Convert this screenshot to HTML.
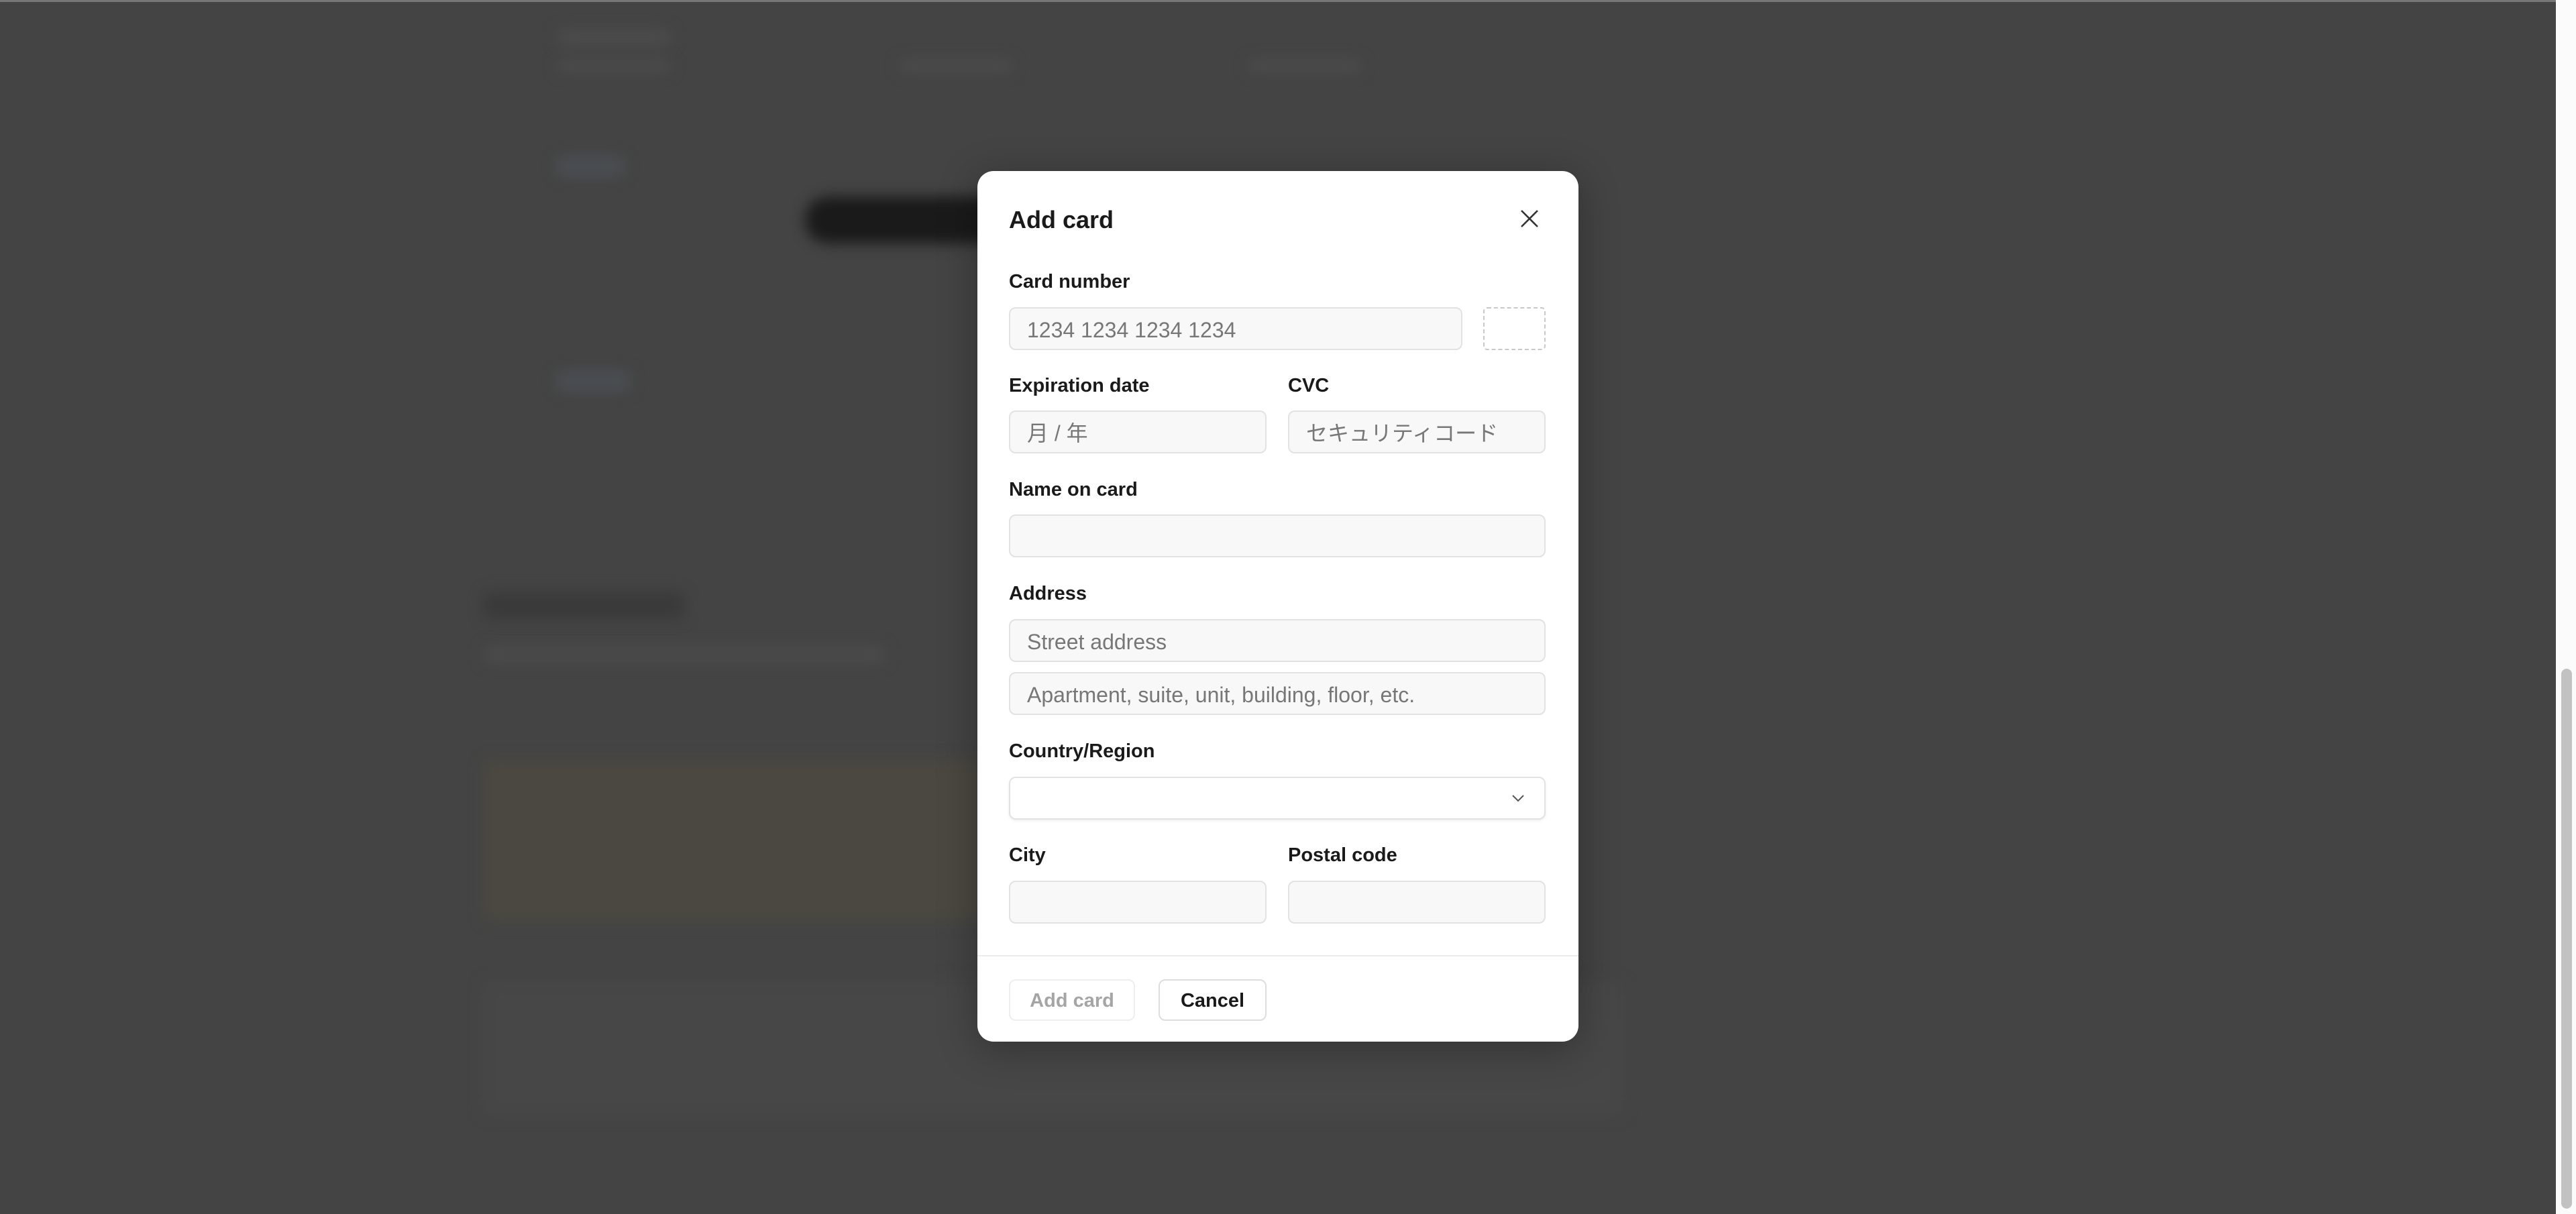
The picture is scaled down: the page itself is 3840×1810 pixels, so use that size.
<!DOCTYPE html>
<html><head><meta charset="utf-8"><style>
*{box-sizing:border-box;margin:0;padding:0}
html,body{width:3840px;height:1810px;overflow:hidden;background:#444;font-family:"Liberation Sans","Noto Sans CJK JP",sans-serif}
.bg{position:absolute;left:0;top:0;width:3810px;height:1810px;background:#444;border-top:3px solid #777}
.blob{position:absolute;filter:blur(10px);border-radius:10px}
.sb{position:absolute;left:3810px;top:0;width:30px;height:1810px;background:#fbfbfb}
.thumb{position:absolute;left:3818px;top:997px;width:16px;height:805px;border-radius:8px;background:#c2c2c2}
.m{position:absolute;left:1457px;top:255px;width:896px;height:1298px;background:#fff;border-radius:24px;box-shadow:0 10px 60px rgba(0,0,0,.3)}
.a{position:absolute}
.t{font-size:36px;font-weight:bold;color:#1a1a1a}
.l{font-size:29px;font-weight:bold;color:#1a1a1a;margin-top:3px}
.i{position:absolute;height:64px;background:#f8f8f8;border:2px solid #e2e2e2;border-radius:10px;font-size:32px;color:#777;padding-left:25px;padding-top:2px;line-height:60px}
.btn{position:absolute;height:62px;border-radius:10px;font-size:29px;font-weight:bold;text-align:center;line-height:60px}
</style></head><body>
<div class="bg">
 <div class="blob" style="left:830px;top:40px;width:170px;height:26px;background:#4b4b4b"></div>
 <div class="blob" style="left:830px;top:85px;width:170px;height:20px;background:#4b4b4b"></div>
 <div class="blob" style="left:1340px;top:85px;width:170px;height:20px;background:#4b4b4b"></div>
 <div class="blob" style="left:1860px;top:85px;width:170px;height:20px;background:#4b4b4b"></div>
 <div class="blob" style="left:830px;top:230px;width:100px;height:30px;background:#4a4e52"></div>
 <div class="blob" style="left:1200px;top:290px;width:300px;height:70px;background:#1a1a1a;border-radius:35px"></div>
 <div class="blob" style="left:830px;top:550px;width:110px;height:30px;background:#4a4e52"></div>
 <div class="blob" style="left:720px;top:880px;width:300px;height:40px;background:#3a3a3a"></div>
 <div class="blob" style="left:720px;top:960px;width:600px;height:26px;background:#4a4a4a"></div>
 <div class="blob" style="left:720px;top:1130px;width:800px;height:240px;background:#4a4840"></div>
 <div class="blob" style="left:720px;top:1460px;width:1700px;height:200px;background:#474747"></div>
</div>
<div class="sb"></div><div class="thumb"></div>
<div class="m">
 <div class="a t" style="left:47px;top:52px">Add card</div>
 <svg class="a" style="left:808px;top:56px" width="30" height="30" viewBox="0 0 30 30"><path d="M3 3L27 27M27 3L3 27" stroke="#333" stroke-width="2.6" fill="none"/></svg>
 <div class="a l" style="left:47px;top:146px">Card number</div>
 <div class="i" style="left:47px;top:203px;width:676px">1234 1234 1234 1234</div>
 <div class="a" style="left:754px;top:203px;width:93px;height:64px;border:2px dashed #c8c8c8;border-radius:6px"></div>
 <div class="a l" style="left:47px;top:301px">Expiration date</div>
 <div class="a l" style="left:463px;top:301px">CVC</div>
 <div class="i" style="left:47px;top:357px;width:384px">月 / 年</div>
 <div class="i" style="left:463px;top:357px;width:384px">セキュリティコード</div>
 <div class="a l" style="left:47px;top:456px">Name on card</div>
 <div class="i" style="left:47px;top:512px;width:800px"></div>
 <div class="a l" style="left:47px;top:611px">Address</div>
 <div class="i" style="left:47px;top:668px;width:800px">Street address</div>
 <div class="i" style="left:47px;top:747px;width:800px">Apartment, suite, unit, building, floor, etc.</div>
 <div class="a l" style="left:47px;top:846px">Country/Region</div>
 <div class="i" style="left:47px;top:903px;width:800px;background:#fff;box-shadow:0 2px 3px rgba(0,0,0,.06)"></div>
 <svg class="a" style="left:796px;top:928px" width="20" height="14" viewBox="0 0 20 14"><path d="M2 3L10 11L18 3" stroke="#555" stroke-width="2" fill="none"/></svg>
 <div class="a l" style="left:47px;top:1001px">City</div>
 <div class="a l" style="left:463px;top:1001px">Postal code</div>
 <div class="i" style="left:47px;top:1058px;width:384px"></div>
 <div class="i" style="left:463px;top:1058px;width:384px"></div>
 <div class="a" style="left:0;top:1169px;width:896px;height:2px;background:#ebebeb"></div>
 <div class="btn" style="left:47px;top:1205px;width:188px;border:2px solid #eee;color:#a5a5a5">Add card</div>
 <div class="btn" style="left:270px;top:1205px;width:161px;border:2px solid #ddd;color:#1a1a1a">Cancel</div>
</div>
</body></html>
